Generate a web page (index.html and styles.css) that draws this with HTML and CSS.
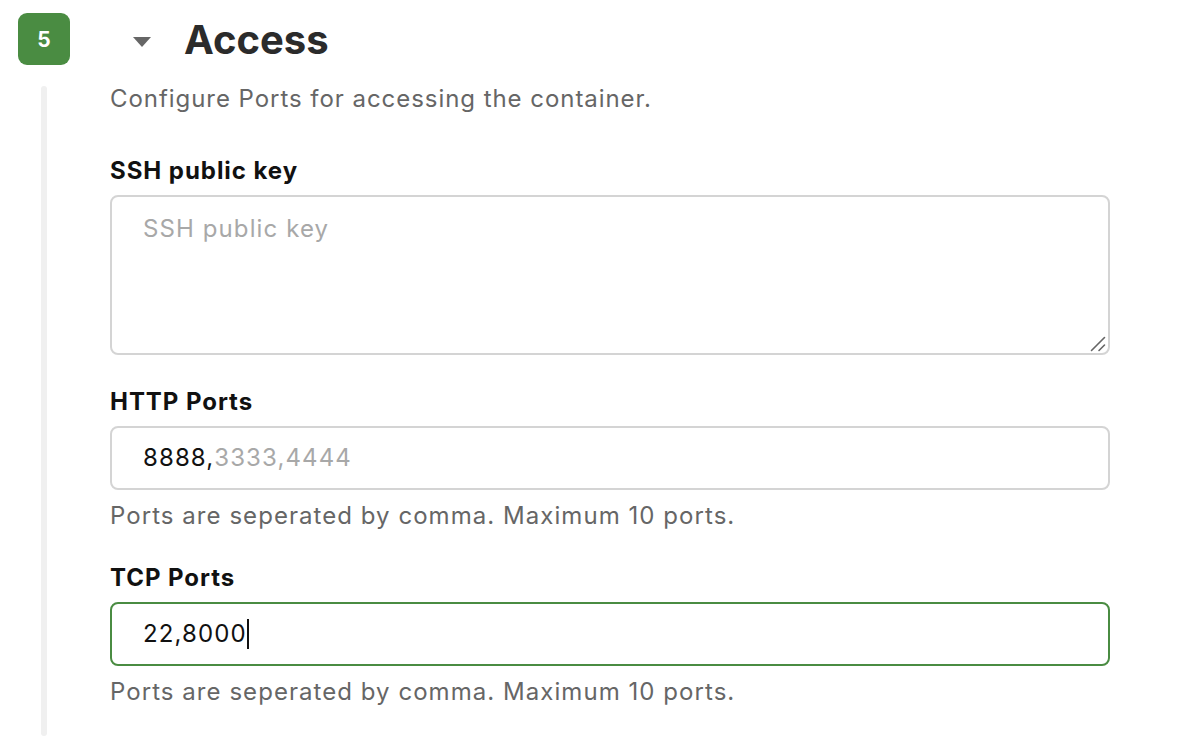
FILE: index.html
```html
<!DOCTYPE html>
<html lang="en">
<head>
    <meta charset="UTF-8">
    <meta name="viewport" content="width=device-width, initial-scale=1.0">
    <title>Access</title>
    <link rel="stylesheet" href="styles.css">
</head>
<body>

<section class="step">
    <!-- Step header -->
    <div class="step-head">
        <span class="step-badge">5</span>
        <span class="step-caret"></span>
        <h2 class="step-title">Access</h2>
    </div>

    <div class="step-body">
        <div class="step-rail"></div>

        <div class="step-content">
            <p class="step-desc">Configure Ports for accessing the container.</p>

            <label class="field-label label-ssh" for="ssh">SSH public key</label>
            <div class="area-wrap">
                <textarea id="ssh" class="field-area" placeholder="SSH public key"></textarea>
                <!-- resize grip -->
                <svg class="grip" width="16" height="16" viewBox="0 0 16 16">
                    <path d="M1.5 14.5 L14.5 1.5 M9 14.5 L14.5 9" stroke="#666" stroke-width="1.6" stroke-linecap="round" fill="none"/>
                </svg>
            </div>

            <label class="field-label">HTTP Ports</label>
            <div class="field-input">8888,<span class="hint">3333,4444</span></div>
            <p class="field-help">Ports are seperated by comma. Maximum 10 ports.</p>

            <label class="field-label">TCP Ports</label>
            <div class="field-input focused">22,8000<span class="cursor"></span></div>
            <p class="field-help">Ports are seperated by comma. Maximum 10 ports.</p>
        </div>
    </div>
</section>

</body>
</html>
```

FILE: styles.css
```css
/* Reset */
* {
    margin: 0;
    padding: 0;
    box-sizing: border-box;
}

body {
    font-family: Inter, "Noto Sans", sans-serif;
    background-color: white;
    color: #111;
    width: 1200px;
    height: 752px;
    overflow: hidden;
}

/* Step header */
.step-head {
    display: flex;
    align-items: center;
    padding: 13px 0 0 18px;
    height: 65px;
}

.step-badge {
    width: 52px;
    height: 52px;
    border-radius: 9px;
    background-color: #4a8c42;
    color: white;
    font-weight: 700;
    font-size: 21px;
    display: flex;
    align-items: center;
    justify-content: center;
}

.step-caret {
    margin-left: 63px;
    width: 0;
    height: 0;
    border-left: 9px solid transparent;
    border-right: 9px solid transparent;
    border-top: 10px solid #666;
    margin-top: 6px;
}

.step-title {
    margin-left: 33px;
    font-size: 40px;
    font-weight: 700;
    color: #2b2b2b;
    line-height: 52px;
    margin-top: 2px;
}

/* Step body */
.step-body {
    display: flex;
    padding-top: 19px;
}

.step-rail {
    margin: 2px 0 0 41px;
    width: 6px;
    height: 650px;
    border-radius: 3px;
    background-color: #f0f0f0;
    flex-shrink: 0;
}

.step-content {
    margin-left: 63px;
    width: 1000px;
    display: flex;
    flex-direction: column;
    font-size: 24px;
    line-height: 30px;
    letter-spacing: 1px;
}

.step-desc {
    color: #666;
    letter-spacing: 0.95px;
}

/* Fields */
.field-label {
    display: block;
    font-weight: 700;
    color: #111;
    margin: 32px 0 9px;
    letter-spacing: 0.95px;
}

.label-ssh {
    margin-top: 42px;
}

.area-wrap {
    position: relative;
    width: 1000px;
    height: 160px;
}

.grip {
    position: absolute;
    right: 4px;
    bottom: 3px;
    pointer-events: none;
}

.field-area,
.field-input {
    width: 1000px;
    border: 2px solid #d4d4d4;
    border-radius: 8px;
    font-family: inherit;
    font-size: 24px;
    letter-spacing: 1.1px;
    color: #111;
    background-color: white;
    outline: none;
}

.field-area {
    display: block;
    height: 160px;
    padding: 17px 31px;
    line-height: 30px;
    resize: none;
}

.field-area::placeholder {
    color: #a8a8a8;
}

.field-input {
    height: 64px;
    padding: 0 31px;
    display: flex;
    align-items: center;
}

.field-input .hint {
    color: #a8a8a8;
}

.field-input.focused {
    border-color: #4a8c42;
}

.cursor {
    display: inline-block;
    width: 2px;
    height: 30px;
    background-color: #111;
}

.field-help {
    color: #666;
    margin-top: 11px;
    letter-spacing: 1.05px;
}
```
